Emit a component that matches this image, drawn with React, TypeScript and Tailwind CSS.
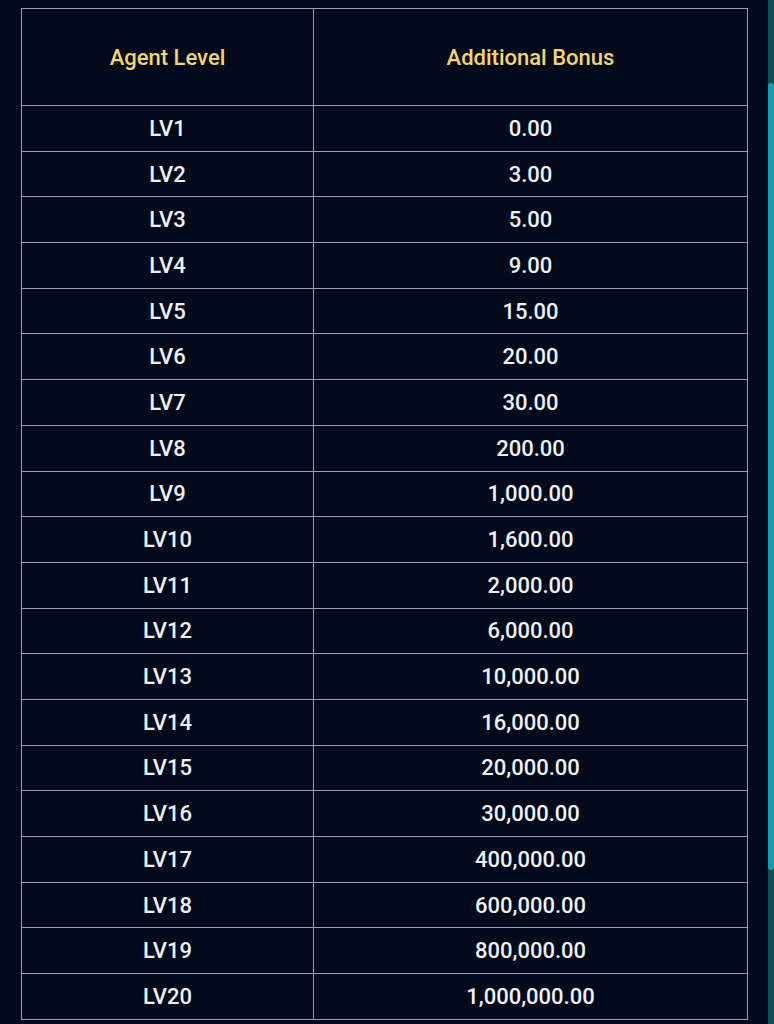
import React from 'react';

const ROWS: [string, string][] = [
  ['LV1', '0.00'],
  ['LV2', '3.00'],
  ['LV3', '5.00'],
  ['LV4', '9.00'],
  ['LV5', '15.00'],
  ['LV6', '20.00'],
  ['LV7', '30.00'],
  ['LV8', '200.00'],
  ['LV9', '1,000.00'],
  ['LV10', '1,600.00'],
  ['LV11', '2,000.00'],
  ['LV12', '6,000.00'],
  ['LV13', '10,000.00'],
  ['LV14', '16,000.00'],
  ['LV15', '20,000.00'],
  ['LV16', '30,000.00'],
  ['LV17', '400,000.00'],
  ['LV18', '600,000.00'],
  ['LV19', '800,000.00'],
  ['LV20', '1,000,000.00'],
];

const App: React.FC = () => {
  return (
    <div
      className="flex h-[1024px] w-full overflow-hidden bg-[#020a1b]"
      style={{ fontFamily: 'Roboto, "Liberation Sans", sans-serif' }}
    >
      <div className="flex-1 pl-[21px] pr-[20px] pt-[8px]">
        <div className="border-x border-t border-[#959fb1] text-[22px] font-medium">
          <div className="grid h-[97px] grid-cols-[292px_1fr] border-b border-[#959fb1] text-[#f4d46c]">
            <div className="flex items-center justify-center border-r border-[#959fb1]">Agent Level</div>
            <div className="flex items-center justify-center">Additional Bonus</div>
          </div>
          {ROWS.map(([level, bonus]) => (
            <div
              key={level}
              className="grid h-[45.7px] grid-cols-[292px_1fr] border-b border-[#959fb1] text-[#eef1f6]"
            >
              <div className="flex items-center justify-center border-r border-[#959fb1]">{level}</div>
              <div className="flex items-center justify-center">{bonus}</div>
            </div>
          ))}
        </div>
      </div>
      <div className="flex w-[6px] flex-col bg-[#0c5357] pb-[154px] pt-[83px]">
        <div className="flex-1 rounded-full bg-[#15a0a9]" />
      </div>
    </div>
  );
};

export default App;
